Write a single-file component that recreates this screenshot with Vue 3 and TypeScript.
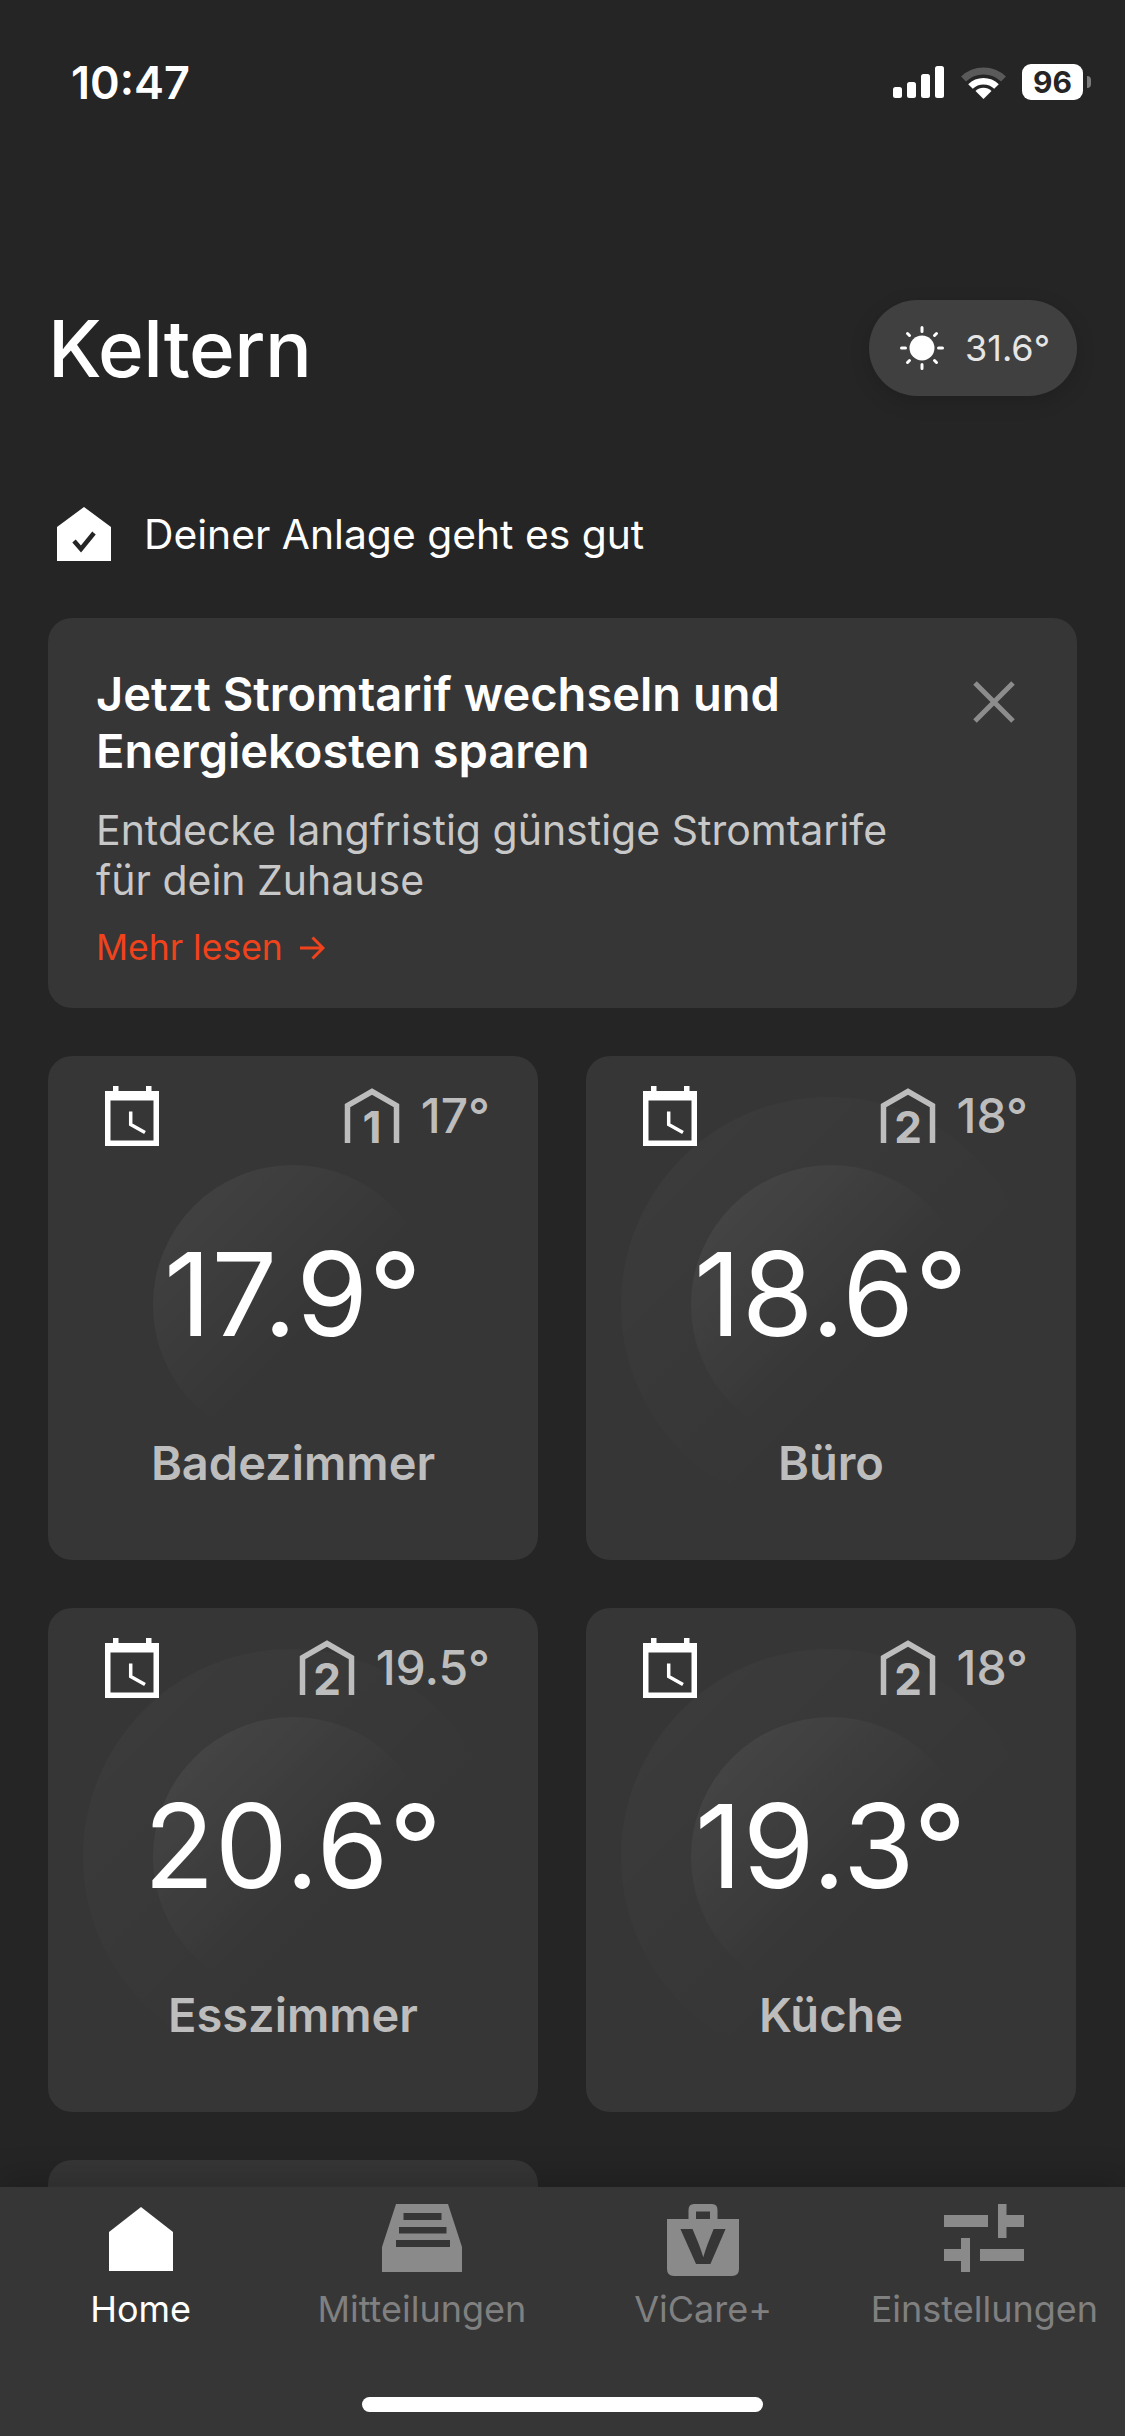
<script setup lang="ts">
interface Room {
  name: string;
  temp: string;
  target: string;
  level: string;
  heating: boolean;
}

const rooms: Room[] = [
  { name: 'Badezimmer', temp: '17.9°', target: '17°', level: '1', heating: false },
  { name: 'Büro', temp: '18.6°', target: '18°', level: '2', heating: true },
  { name: 'Esszimmer', temp: '20.6°', target: '19.5°', level: '2', heating: true },
  { name: 'Küche', temp: '19.3°', target: '18°', level: '2', heating: true },
];
</script>

<template>
  <div class="page">
    <div class="status">
      <span class="clock">10:47</span>
      <div class="status-icons">
        <svg class="signal" width="51" height="32" viewBox="0 0 51 32" fill="#fff">
          <rect x="0" y="21" width="9" height="11" rx="2.5" />
          <rect x="14" y="16" width="9" height="16" rx="2.5" />
          <rect x="28" y="8" width="9" height="24" rx="2.5" />
          <rect x="42" y="0" width="9" height="32" rx="2.5" />
        </svg>
        <svg class="wifi" width="45" height="33" viewBox="0 0 45 33" fill="none">
          <path d="M2.5 13 A29 29 0 0 1 42.5 13" stroke="#5a5a5a" stroke-width="7" />
          <path d="M9.5 20.5 A18.5 18.5 0 0 1 35.5 20.5" stroke="#fff" stroke-width="6.5" />
          <path d="M14.5 25 A11.5 11.5 0 0 1 30.5 25 L22.5 33 Z" fill="#fff" />
        </svg>
        <div class="battery">96</div>
        <span class="battery-nub"></span>
      </div>
    </div>

    <header class="head">
      <h1 class="title">Keltern</h1>
      <div class="weather">
        <svg width="44" height="44" viewBox="0 0 44 44" fill="none" stroke="#fff" stroke-width="3" stroke-linecap="round">
          <circle cx="22" cy="22" r="12.5" fill="#fff" stroke="none" />
          <path d="M22 1.5v4M22 38.5v4M1.5 22h4M38.5 22h4M7.5 7.5l2 2M34.5 34.5l2 2M7.5 36.5l2-2M34.5 9.5l2-2" />
        </svg>
        <span>31.6°</span>
      </div>
    </header>

    <div class="health">
      <svg width="54" height="54" viewBox="0 0 54 54">
        <path d="M27 0 L54 20 V54 H0 V20 Z" fill="#fff" />
        <path d="M17 34 L24 42 L37 26" fill="none" stroke="#252525" stroke-width="4.5" />
      </svg>
      <span>Deiner Anlage geht es gut</span>
    </div>

    <section class="promo">
      <div class="promo-text">
        <h2>Jetzt Stromtarif wechseln und Energiekosten sparen</h2>
        <p>Entdecke langfristig günstige Stromtarife für dein Zuhause</p>
        <a class="more">
          Mehr lesen
          <svg width="26" height="26" viewBox="0 0 26 26" fill="none" stroke="currentColor" stroke-width="3">
            <path d="M1 13h23M13.5 2.5 24 13 13.5 23.5" />
          </svg>
        </a>
      </div>
      <svg class="close" width="42" height="42" viewBox="0 0 42 42" stroke="#8c8c8c" stroke-width="5">
        <path d="M2 2l38 38M40 2L2 40" />
      </svg>
    </section>

    <div class="rooms">
      <article v-for="room in rooms" :key="room.name" class="room">
        <span v-if="room.heating" class="halo"></span>
        <span class="disc"></span>
        <div class="room-top">
          <svg class="cal" width="54" height="60" viewBox="0 0 54 60">
            <path fill="#fff" d="M8 0h5.5v5h27.5V0h5.5v5H54v55H0V5h8z" />
            <rect x="5.5" y="14.5" width="43" height="40" fill="#363636" />
            <path d="M25.7 25.5V38.5L40 46.5" fill="none" stroke="#fff" stroke-width="3.5" />
          </svg>
          <div class="target">
            <svg class="floor" width="54" height="54" viewBox="0 0 54 54" fill="none">
              <path d="M2.5 54V16.5L27 2.5L51.5 16.5V54" stroke="#bdbdbd" stroke-width="5.5" />
              <text x="27" y="54" text-anchor="middle" class="level">{{ room.level }}</text>
            </svg>
            <span>{{ room.target }}</span>
          </div>
        </div>
        <div class="temp">{{ room.temp }}</div>
        <div class="name">{{ room.name }}</div>
      </article>
      <article class="room"></article>
    </div>

    <nav class="tabs">
      <div class="tab active">
        <div class="tab-icon">
          <svg width="64" height="64" viewBox="0 0 64 64" fill="#fff">
            <path d="M32 0 L64 25 V64 H0 V25 Z" />
          </svg>
        </div>
        <span>Home</span>
      </div>
      <div class="tab">
        <div class="tab-icon">
          <svg width="80" height="68" viewBox="0 0 80 68" fill="#8a8a8a">
            <path
              fill-rule="evenodd"
              d="M14 0H66L80 43V68H0V43ZM21.5 9V16H59.5V9ZM17 23V29.5H64.5V23ZM14 36V43H68V36Z"
            />
          </svg>
        </div>
        <span>Mitteilungen</span>
      </div>
      <div class="tab">
        <div class="tab-icon">
          <svg width="72" height="72" viewBox="0 0 72 72" fill="#8a8a8a">
            <path
              fill-rule="evenodd"
              d="M21.5 15V6Q21.5 0 27 0H45Q50.5 0 50.5 6V15H72V65Q72 72 65 72H7Q0 72 0 65V15ZM29 7.5V15H43V7.5Z"
            />
            <text x="36" y="60" text-anchor="middle" class="vee" textLength="48" lengthAdjust="spacingAndGlyphs">V</text>
          </svg>
        </div>
        <span>ViCare+</span>
      </div>
      <div class="tab">
        <div class="tab-icon">
          <svg width="80" height="68" viewBox="0 0 80 68" fill="#8a8a8a">
            <path d="M0 11h44v12H0zM54 0h8.5v11H80v12H62.5v11H54zM17 34h9v34h-9V57H0V45h17zM36 45h44v12H36z" />
          </svg>
        </div>
        <span>Einstellungen</span>
      </div>
      <span class="home-bar"></span>
    </nav>
  </div>
</template>

<style>
html,
body {
  margin: 0;
  background: #252525;
}
</style>

<style scoped>
.page {
  position: relative;
  width: 1125px;
  height: 2436px;
  overflow: hidden;
  box-sizing: border-box;
  padding: 0 48px;
  background: #252525;
  color: #fff;
  font-family: Inter, 'Liberation Sans', sans-serif;
}

/* status bar */
.status {
  display: flex;
  align-items: center;
  justify-content: space-between;
  height: 164px;
  margin: 0 -48px;
  padding: 0 34px 0 71px;
}
.clock {
  font-size: 45px;
  font-weight: 600;
}
.status-icons {
  display: flex;
  align-items: center;
}
.signal {
  margin-right: 17px;
}
.wifi {
  margin-right: 16px;
}
.battery {
  width: 61px;
  height: 36px;
  border-radius: 9px;
  background: #fff;
  color: #252525;
  font-size: 30px;
  font-weight: 700;
  line-height: 36px;
  text-align: center;
}
.battery-nub {
  width: 4px;
  height: 12px;
  margin-left: 4px;
  border-radius: 0 4px 4px 0;
  background: #7c7c7c;
}

/* heading */
.head {
  display: flex;
  align-items: center;
  justify-content: space-between;
  height: 96px;
  margin-top: 136px;
}
.title {
  margin: 0;
  font-size: 78px;
  font-weight: 500;
  letter-spacing: -0.5px;
}
.weather {
  display: flex;
  align-items: center;
  gap: 21px;
  box-sizing: border-box;
  width: 208px;
  height: 96px;
  padding-left: 31px;
  border-radius: 48px;
  background: #404040;
  box-shadow: 0 6px 20px rgba(0, 0, 0, 0.15);
  font-size: 36px;
  color: #e6e6e6;
}

.health {
  display: flex;
  align-items: center;
  gap: 33px;
  height: 54px;
  margin-top: 111px;
  padding-left: 9px;
  font-size: 40.8px;
}

/* promo banner */
.promo {
  display: flex;
  justify-content: space-between;
  box-sizing: border-box;
  height: 390px;
  margin-top: 57px;
  padding: 47px 62px 0 48px;
  border-radius: 24px;
  background: #363636;
}
.promo-text {
  width: 810px;
}
.promo h2 {
  margin: 0;
  font-size: 47px;
  font-weight: 600;
  line-height: 57px;
}
.promo p {
  margin: 26px 0 0;
  font-size: 41px;
  line-height: 50px;
  color: #c8c8c8;
}
.more {
  display: flex;
  align-items: center;
  gap: 16px;
  margin-top: 21px;
  font-size: 35.5px;
  line-height: 44px;
  color: #f0431c;
}
.close {
  margin-top: 16px;
}

/* room cards */
.rooms {
  display: grid;
  grid-template-columns: 490px 490px;
  grid-auto-rows: 504px;
  gap: 48px;
  margin-top: 48px;
}
.room {
  position: relative;
  overflow: hidden;
  border-radius: 24px;
  background: #363636;
}
.halo,
.disc {
  position: absolute;
  border-radius: 50%;
}
.halo {
  top: 41px;
  left: 35px;
  width: 416px;
  height: 416px;
  background: linear-gradient(135deg, rgba(255, 255, 255, 0.03), rgba(255, 255, 255, 0) 65%);
}
.disc {
  top: 109px;
  left: 105px;
  width: 280px;
  height: 280px;
  background: linear-gradient(135deg, rgba(255, 255, 255, 0.07), rgba(255, 255, 255, 0) 58%);
}
.room:last-child .disc {
  display: none;
}
.room-top {
  position: relative;
  display: flex;
  align-items: flex-start;
  justify-content: space-between;
  height: 60px;
  padding: 30px 48px 0 57px;
}
.floor {
  overflow: visible;
}
.level {
  font-size: 44px;
  font-weight: 700;
  fill: #bdbdbd;
}
.target {
  display: flex;
  gap: 22px;
  margin-top: 3px;
  font-size: 48px;
  font-weight: 500;
  line-height: 54px;
  color: #bdbdbd;
}
.temp {
  position: relative;
  margin-top: 78px;
  font-size: 116px;
  font-weight: 400;
  line-height: 140px;
  letter-spacing: 0.5px;
  text-align: center;
}
.name {
  position: relative;
  margin-top: 71px;
  font-size: 47px;
  font-weight: 600;
  line-height: 56px;
  text-align: center;
  color: #bdbdbd;
}

/* tab bar */
.tabs {
  position: absolute;
  left: 0;
  right: 0;
  bottom: 0;
  display: grid;
  grid-template-columns: repeat(4, 1fr);
  height: 249px;
  background: #363636;
  box-shadow: 0 -10px 30px rgba(0, 0, 0, 0.18);
}
.tab {
  display: flex;
  flex-direction: column;
  align-items: center;
  padding-top: 17px;
  font-size: 36px;
  color: #808080;
}
.tab-icon {
  display: flex;
  align-items: flex-start;
  justify-content: center;
  height: 72px;
  margin-bottom: 11px;
}
.tab.active {
  color: #fff;
}
.tab.active .tab-icon {
  padding-top: 3px;
  height: 69px;
}
.vee {
  font-size: 48px;
  font-weight: 800;
  fill: #363636;
}
.home-bar {
  position: absolute;
  left: 362px;
  bottom: 24px;
  width: 401px;
  height: 15px;
  border-radius: 8px;
  background: #fff;
}
</style>
